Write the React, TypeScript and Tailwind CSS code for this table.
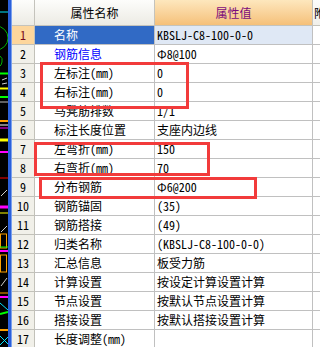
import React from 'react';

type Row = { n: number; name: string; value: string };

const rows: Row[] = [
  { n: 1, name: '名称', value: 'KBSLJ-C8-100-0-0' },
  { n: 2, name: '钢筋信息', value: 'Φ8@100' },
  { n: 3, name: '左标注(mm)', value: '0' },
  { n: 4, name: '右标注(mm)', value: '0' },
  { n: 5, name: '马凳筋排数', value: '1/1' },
  { n: 6, name: '标注长度位置', value: '支座内边线' },
  { n: 7, name: '左弯折(mm)', value: '150' },
  { n: 8, name: '右弯折(mm)', value: '70' },
  { n: 9, name: '分布钢筋', value: 'Φ6@200' },
  { n: 10, name: '钢筋锚固', value: '(35)' },
  { n: 11, name: '钢筋搭接', value: '(49)' },
  { n: 12, name: '归类名称', value: '(KBSLJ-C8-100-0-0)' },
  { n: 13, name: '汇总信息', value: '板受力筋' },
  { n: 14, name: '计算设置', value: '按设定计算设置计算' },
  { n: 15, name: '节点设置', value: '按默认节点设置计算' },
  { n: 16, name: '搭接设置', value: '按默认搭接设置计算' },
  { n: 17, name: '长度调整(mm)', value: '' },
];

function CadStrip() {
  return (
    <svg width="8" height="347" viewBox="0 0 8 347" className="block shrink-0 bg-black">
      <line x1="0" y1="12" x2="8" y2="12" stroke="#00e5ff" strokeWidth="1" />
      <circle cx="-4" cy="38" r="12" fill="none" stroke="#00b000" strokeWidth="1" />
      <path d="M0 56 Q3 58 2 62 Q1 66 0 66" fill="none" stroke="#00b000" strokeWidth="1" />
      <line x1="0" y1="73.5" x2="8" y2="73.5" stroke="#00ff00" strokeWidth="2" />
      <line x1="2" y1="80" x2="7" y2="78" stroke="#d0d0d0" strokeWidth="1" />
      <line x1="2" y1="84" x2="7" y2="83" stroke="#d0d0d0" strokeWidth="1" />
      <line x1="0" y1="88.5" x2="8" y2="88.5" stroke="#ffff00" strokeWidth="2" />
      <line x1="0" y1="97" x2="8" y2="97" stroke="#00ff00" strokeWidth="2" />
      <line x1="0" y1="102" x2="8" y2="102" stroke="#c0c0c0" strokeWidth="1" />
      <line x1="0" y1="121" x2="8" y2="121" stroke="#ffa000" strokeWidth="2" />
      <line x1="0" y1="125" x2="8" y2="125" stroke="#ffffff" strokeWidth="1" />
      <line x1="0" y1="128" x2="8" y2="128" stroke="#ff00ff" strokeWidth="1" />
      <line x1="0" y1="140" x2="8" y2="140" stroke="#ffff00" strokeWidth="3" />
      <line x1="0" y1="152" x2="8" y2="152" stroke="#ff00ff" strokeWidth="2" />
      <line x1="0" y1="178" x2="8" y2="178" stroke="#ff0000" strokeWidth="1" />
      <line x1="1" y1="196" x2="7" y2="190" stroke="#d0d0d0" strokeWidth="1" />
      <line x1="0" y1="207" x2="8" y2="207" stroke="#ff00ff" strokeWidth="3" />
      <line x1="0" y1="213" x2="8" y2="213" stroke="#ffff00" strokeWidth="1" />
      <line x1="1" y1="232" x2="7" y2="226" stroke="#d0d0d0" strokeWidth="1" />
      <rect x="0.5" y="234" width="6" height="14" fill="none" stroke="#ffa000" strokeWidth="1" />
      <line x1="0" y1="247" x2="8" y2="247" stroke="#00ff00" strokeWidth="1" />
      <line x1="0" y1="251" x2="8" y2="251" stroke="#ff00ff" strokeWidth="2" />
      <rect x="0.5" y="255" width="6" height="17" fill="none" stroke="#ffa000" strokeWidth="1" />
      <line x1="1" y1="286" x2="7" y2="278" stroke="#d0d0d0" strokeWidth="1" />
      <line x1="0" y1="293" x2="8" y2="293" stroke="#ffa000" strokeWidth="1" />
      <line x1="0" y1="297" x2="8" y2="297" stroke="#ff00ff" strokeWidth="2" />
      <line x1="0" y1="303" x2="8" y2="310" stroke="#00e5ff" strokeWidth="1" />
      <line x1="0" y1="314" x2="8" y2="312" stroke="#00ff00" strokeWidth="2" />
      <line x1="0" y1="330" x2="8" y2="330" stroke="#ffa000" strokeWidth="2" />
      <line x1="0" y1="336" x2="8" y2="344" stroke="#00e5ff" strokeWidth="1" />
      <line x1="0" y1="345" x2="8" y2="337" stroke="#00e5ff" strokeWidth="1" />
    </svg>
  );
}

export default function App() {
  return (
    <div className="relative flex w-[320px] h-[347px] overflow-hidden bg-white text-[12px] leading-[18px] text-black font-['Noto_Sans_Mono_CJK_SC','Noto_Sans_CJK_SC',monospace]">
      <CadStrip />
      <div className="w-[4px] shrink-0 bg-[#2b60da] border-r border-[#7aa0ee]" />
      <div className="flex-1 overflow-hidden">
        <div className="grid grid-cols-[23px_120px_158px_40px] w-[341px]">
          {/* header */}
          <div className="h-[26px] bg-gradient-to-b from-[#fdfdfb] to-[#ecebe4] border-r border-b border-[#c4c3bc]" />
          <div className="h-[26px] flex items-center justify-center bg-gradient-to-b from-[#fdfdfb] to-[#ecebe4] border-r border-b border-[#c4c3bc]">
            属性名称
          </div>
          <div className="h-[26px] flex items-center justify-center bg-gradient-to-b from-[#fde7bd] to-[#f5c079] border-r border-b border-[#c4c3bc] text-[#7b0b7b]">
            属性值
          </div>
          <div className="h-[26px] flex items-center pl-[1px] bg-gradient-to-b from-[#fdfdfb] to-[#f0efea] border-b border-[#c4c3bc] whitespace-nowrap">
            附加
          </div>
          {rows.map((r) => {
            const first = r.n === 1;
            return (
              <React.Fragment key={r.n}>
                <div
                  className={
                    'h-[19px] flex items-center justify-center border-r border-b border-[#c2c1b9] ' +
                    (first ? 'bg-[#fdd69c] text-[#7a0a1a]' : 'bg-[#f1f0e9]')
                  }
                >
                  {r.n}
                </div>
                <div
                  className={
                    'h-[19px] flex items-center pl-[19px] border-r border-b border-[#c0c0c0] whitespace-nowrap ' +
                    (first ? 'bg-[#316ac5] text-white' : r.n === 2 ? 'text-[#0000ff]' : '')
                  }
                >
                  {r.name}
                </div>
                <div
                  className={
                    'h-[19px] flex items-center pl-[2px] border-r border-b border-[#c0c0c0] whitespace-nowrap ' +
                    (first ? 'bg-[#dfe8f5]' : '')
                  }
                >
                  {r.value}
                </div>
                <div className="h-[19px] border-b border-[#c0c0c0]" />
              </React.Fragment>
            );
          })}
        </div>
      </div>
      {/* red annotation boxes */}
      <div className="absolute left-[40px] top-[62px] w-[149px] h-[47px] border-[3px] border-[#f23b3b]" />
      <div className="absolute left-[34px] top-[142px] w-[176px] h-[34px] border-[3px] border-[#f23b3b]" />
      <div className="absolute left-[39px] top-[177px] w-[218px] h-[22px] border-[3px] border-[#f23b3b]" />
    </div>
  );
}
